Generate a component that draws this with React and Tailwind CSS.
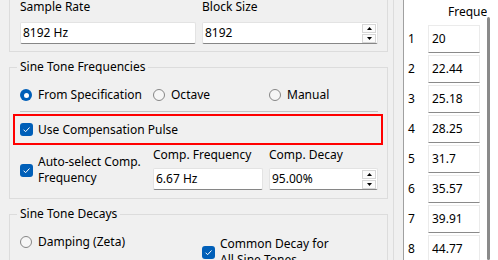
import React from 'react'

const CheckBox = () => (
    <span className="w-[13px] h-[13px] rounded-[3px] bg-[#005fb8] flex items-center justify-center shrink-0">
        <svg width="9" height="9" viewBox="0 0 9 9">
            <path d="M1.6 4.7 L3.6 6.7 L7.5 2.5" fill="none" stroke="#fff" strokeWidth="1" />
        </svg>
    </span>
)

const Radio = ({ checked }) => checked ? (
    <span className="w-[12px] h-[12px] rounded-full bg-[#005fb8] flex items-center justify-center shrink-0">
        <span className="w-[5px] h-[5px] rounded-full bg-white"></span>
    </span>
) : (
    <span className="w-[12px] h-[12px] rounded-full border border-[#868686] bg-[#f6f6f6] shrink-0"></span>
)

const Spin = () => (
    <div className="flex flex-col w-[14px] mr-[1px] gap-[1px]">
        <div className="h-[9px] border border-[#d6d6d6] bg-[#fbfbfb] flex items-center justify-center">
            <svg width="5" height="3" viewBox="0 0 5 3"><polygon points="2.5,0 5,3 0,3" fill="#000" /></svg>
        </div>
        <div className="h-[9px] border border-[#d6d6d6] bg-[#fbfbfb] flex items-center justify-center">
            <svg width="5" height="3" viewBox="0 0 5 3"><polygon points="0,0 5,0 2.5,3" fill="#000" /></svg>
        </div>
    </div>
)

const TextBox = ({ value, spin }) => (
    <div className="h-[22px] bg-white border border-[#e3e3e3] border-b-[#868686] rounded-[2px] flex items-center pl-[2px]">
        <span className="flex-1 leading-[16px]">{value}</span>
        {spin && <Spin />}
    </div>
)

const Group = ({ title, children, className }) => (
    <fieldset className={`border border-[#dcdcdc] ${className}`}>
        <legend className="ml-[7px] px-[3px] leading-[16px]">{title}</legend>
        <div className="pl-[10px] pr-[9px]">{children}</div>
    </fieldset>
)

const freqs = ["20", "22.44", "25.18", "28.25", "31.7", "35.57", "39.91", "44.77"]

const App = () => {
    return (
        <div className="w-[498px] h-[260px] bg-[#f0f0f0] flex overflow-hidden text-[12px] leading-[16px] text-black font-['Noto_Sans',sans-serif]">
            {/* left settings column */}
            <div className="w-[394px] h-full pl-[9px] pr-[5px] border-r border-[#dcdcdc] overflow-hidden shrink-0">
                {/* sample rate / block size */}
                <div className="border border-[#dcdcdc] mt-[-10px] pt-[9px] pb-[7px] pl-[10px] pr-[9px]">
                    <div className="grid grid-cols-[176px_176px] gap-x-[6px] gap-y-[8px]">
                        <span className="leading-[14px]">Sample Rate</span>
                        <span className="leading-[14px]">Block Size</span>
                        <TextBox value="8192 Hz" />
                        <TextBox value="8192" spin />
                    </div>
                </div>

                {/* sine tone frequencies */}
                <Group title="Sine Tone Frequencies" className="mt-[7px] pb-[8px]">
                    <div className="grid grid-cols-[127px_110px_109px] gap-x-[6px] mt-[12px] h-[16px]">
                        <div className="flex items-center gap-[6px]"><Radio checked /><span>From Specification</span></div>
                        <div className="flex items-center gap-[6px]"><Radio /><span>Octave</span></div>
                        <div className="flex items-center gap-[6px]"><Radio /><span>Manual</span></div>
                    </div>
                    <div className="mt-[8px] h-[1px] bg-[#c4c4c4]"></div>
                    <div className="mt-[2px] ml-[-7px] mr-[-5px] h-[31px] border-2 border-[#ff0000] flex items-center gap-[5px] pl-[5px]">
                        <CheckBox />
                        <span>Use Compensation Pulse</span>
                    </div>
                    <div className="mt-[2px] grid grid-cols-[127px_110px_109px] gap-x-[6px]">
                        <div className="flex items-center gap-[5px] pt-[3px]">
                            <CheckBox />
                            <span>Auto-select Comp.<br />Frequency</span>
                        </div>
                        <div className="flex flex-col gap-[5px]">
                            <span>Comp. Frequency</span>
                            <TextBox value="6.67 Hz" />
                        </div>
                        <div className="flex flex-col gap-[5px]">
                            <span>Comp. Decay</span>
                            <TextBox value="95.00%" spin />
                        </div>
                    </div>
                </Group>

                {/* sine tone decays */}
                <Group title="Sine Tone Decays" className="mt-[7px] pb-[8px]">
                    <div className="grid grid-cols-[176px_176px] gap-x-[6px] mt-[12px]">
                        <div className="flex items-center gap-[6px] h-[16px]"><Radio /><span>Damping (Zeta)</span></div>
                        <div className="flex items-center gap-[5px] mt-[2px]">
                            <CheckBox />
                            <span>Common Decay for<br />All Sine Tones</span>
                        </div>
                    </div>
                </Group>
            </div>

            {/* frequency table */}
            <div className="flex-1 h-full pl-[9px]">
                <div className="h-full border-l border-[#a0a0a0] bg-white flex">
                    <div className="w-[83px] overflow-hidden">
                        <div className="h-[25px] pt-[4px] pl-[44px] whitespace-nowrap">Frequency</div>
                        {freqs.map((f, i) => (
                            <div key={"row" + i} className="flex h-[30px]">
                                <div className="w-[24px] h-[28px] pl-[4px] flex items-center">{i + 1}</div>
                                <div className="w-[52px] h-[28px] border border-[#ebebeb] border-b-[#8a8a8a] flex items-center pl-[3px]">{f}</div>
                            </div>
                        ))}
                    </div>
                    <div className="w-[11px] pt-[17px]">
                        <div className="w-[3px] h-full rounded-full bg-[#8a8a8a]"></div>
                    </div>
                </div>
            </div>
        </div>
    )
}

export default App
